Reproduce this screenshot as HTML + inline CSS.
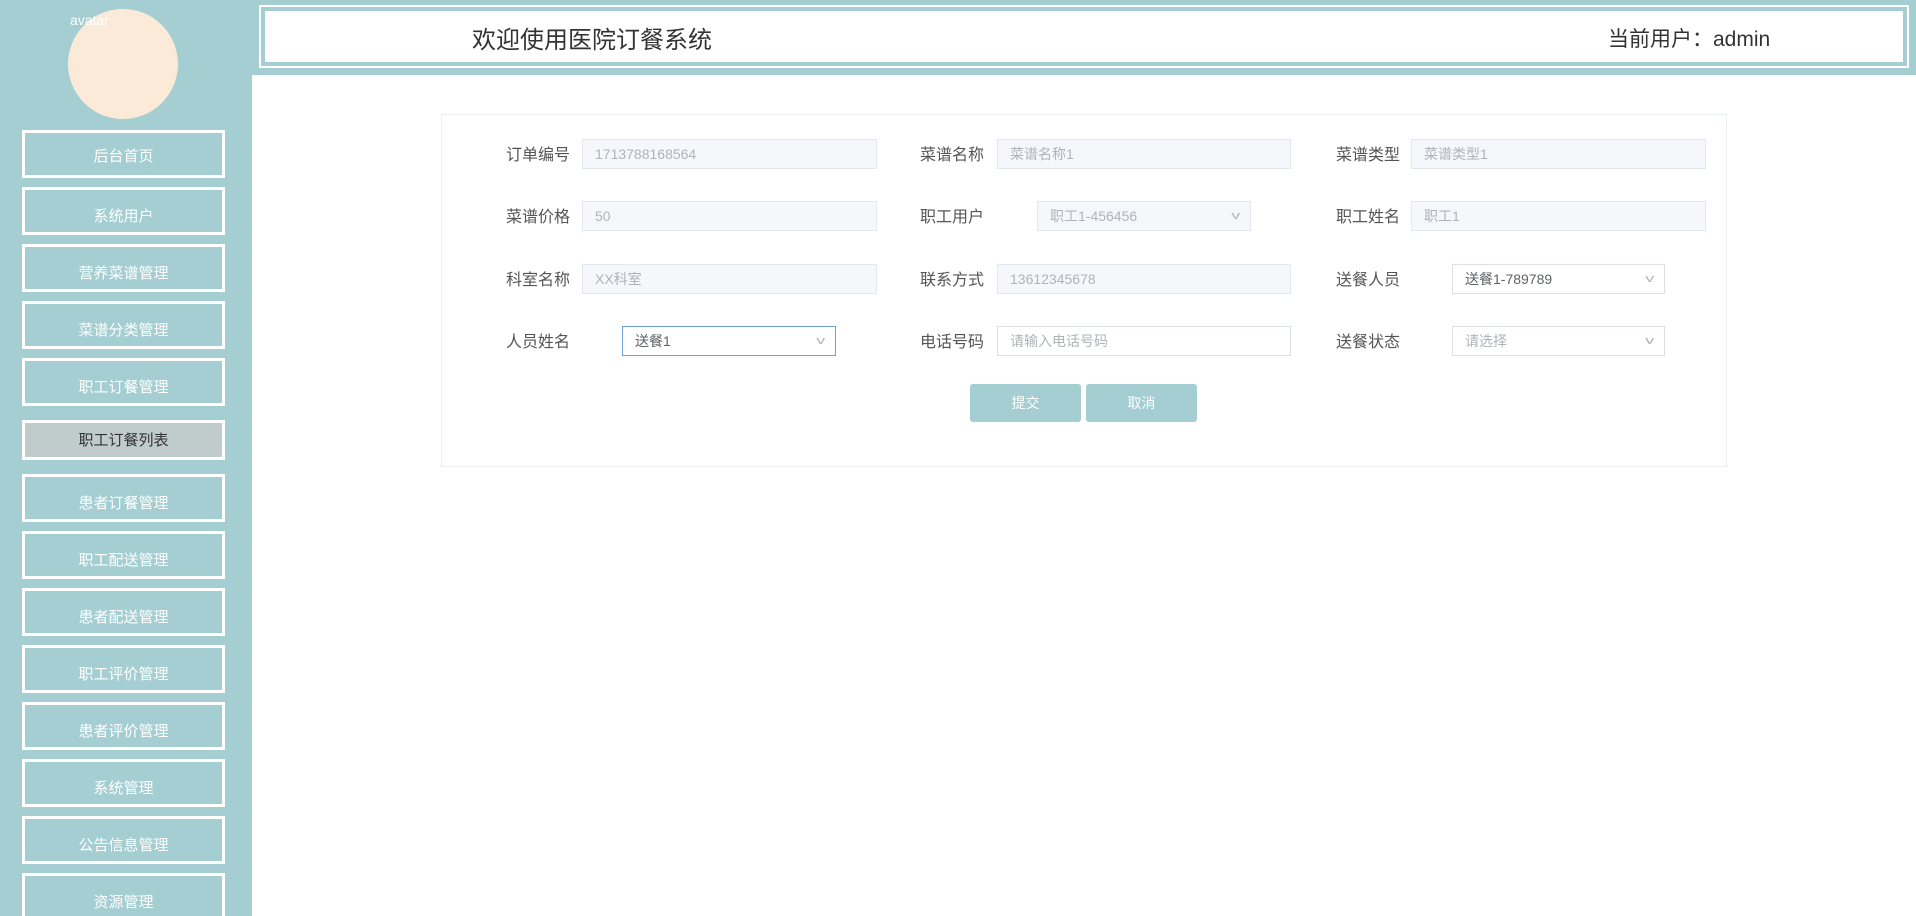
<!DOCTYPE html>
<html><head><meta charset="utf-8"><style>
*{box-sizing:border-box;margin:0;padding:0}
html,body{width:1916px;height:916px;overflow:hidden}
body{background:#fff;font-family:"Liberation Sans","Noto Sans CJK SC",sans-serif;position:relative}
.side{position:absolute;left:0;top:0;width:252px;height:916px;background:#a4ced2}
.av{position:absolute;left:68px;top:9px;width:110px;height:110px;border-radius:50%;background:#fbead8}
.avt{position:absolute;left:70px;top:12px;color:#fff;font-size:14px}
.mi{position:absolute;left:22px;width:203px;height:48px;border:3px solid #fff;color:#fff;font-size:15px;text-align:center;line-height:48px}
.mi.act{background:#c0cccc;color:#333;height:40px;line-height:36px}
.hd{position:absolute;left:252px;top:0;width:1664px;height:75px;background:#a4ced2}
.hbox{position:absolute;left:262px;top:8px;width:1644px;height:57px;background:#fff;border:3px solid #a4ced2;outline:2px solid #fff;outline-offset:1px}
.ttl{position:absolute;left:472px;top:20px;font-size:24px;color:#333}
.usr{position:absolute;left:1608px;top:23px;font-size:21px;color:#333}
.card{position:absolute;left:441px;top:114px;width:1286px;height:353px;border:1px solid #ebeef5}
.lb{position:absolute;font-size:16px;color:#555;line-height:30px;margin-top:2px}
.in{position:absolute;height:30px;border:1px solid #e4e7ed;background:#f5f7fa;color:#b0b3b8;font-size:14px;line-height:28px;padding-left:12px}
.in.w{background:#fff;border-color:#dcdfe6}
.in.sel{border-color:#6fa0d8;color:#606266}
.in.dk{color:#606266}
.ar{position:absolute;right:12px;top:0;color:#b0b3b8;font-size:11px;transform:scaleX(1.6)}
.btn{position:absolute;top:384px;width:111px;height:38px;background:#a4ced2;color:#fff;font-size:14px;text-align:center;line-height:38px;border-radius:3px}
</style></head><body>
<div class="side">
<div class="av"></div><div class="avt">avatar</div>
<div class="mi" style="top:130px">后台首页</div>
<div class="mi" style="top:187px;line-height:54px">系统用户</div>
<div class="mi" style="top:244px;line-height:54px">营养菜谱管理</div>
<div class="mi" style="top:301px;line-height:54px">菜谱分类管理</div>
<div class="mi" style="top:358px;line-height:54px">职工订餐管理</div>
<div class="mi act" style="top:420px">职工订餐列表</div>
<div class="mi" style="top:474px;line-height:54px">患者订餐管理</div>
<div class="mi" style="top:531px;line-height:54px">职工配送管理</div>
<div class="mi" style="top:588px;line-height:54px">患者配送管理</div>
<div class="mi" style="top:645px;line-height:54px">职工评价管理</div>
<div class="mi" style="top:702px;line-height:54px">患者评价管理</div>
<div class="mi" style="top:759px;line-height:54px">系统管理</div>
<div class="mi" style="top:816px;line-height:54px">公告信息管理</div>
<div class="mi" style="top:873px;line-height:54px">资源管理</div>
</div>
<div class="hd"></div>
<div class="hbox"></div>
<div class="ttl">欢迎使用医院订餐系统</div>
<div class="usr">当前用户：admin</div>
<div class="card"></div>

<div class="lb" style="left:506px;top:139px">订单编号</div>
<div class="in" style="left:582px;top:139px;width:295px">1713788168564</div>
<div class="lb" style="left:920px;top:139px">菜谱名称</div>
<div class="in" style="left:997px;top:139px;width:294px">菜谱名称1</div>
<div class="lb" style="left:1336px;top:139px">菜谱类型</div>
<div class="in" style="left:1411px;top:139px;width:295px">菜谱类型1</div>

<div class="lb" style="left:506px;top:201px">菜谱价格</div>
<div class="in" style="left:582px;top:201px;width:295px">50</div>
<div class="lb" style="left:920px;top:201px">职工用户</div>
<div class="in" style="left:1037px;top:201px;width:214px">职工1-456456<span class="ar">v</span></div>
<div class="lb" style="left:1336px;top:201px">职工姓名</div>
<div class="in" style="left:1411px;top:201px;width:295px">职工1</div>

<div class="lb" style="left:506px;top:264px">科室名称</div>
<div class="in" style="left:582px;top:264px;width:295px">XX科室</div>
<div class="lb" style="left:920px;top:264px">联系方式</div>
<div class="in" style="left:997px;top:264px;width:294px">13612345678</div>
<div class="lb" style="left:1336px;top:264px">送餐人员</div>
<div class="in w dk" style="left:1452px;top:264px;width:213px">送餐1-789789<span class="ar">v</span></div>

<div class="lb" style="left:506px;top:326px">人员姓名</div>
<div class="in w sel" style="left:622px;top:326px;width:214px">送餐1<span class="ar">v</span></div>
<div class="lb" style="left:920px;top:326px">电话号码</div>
<div class="in w" style="left:997px;top:326px;width:294px">请输入电话号码</div>
<div class="lb" style="left:1336px;top:326px">送餐状态</div>
<div class="in w" style="left:1452px;top:326px;width:213px">请选择<span class="ar">v</span></div>

<div class="btn" style="left:970px">提交</div>
<div class="btn" style="left:1086px">取消</div>
</body></html>
